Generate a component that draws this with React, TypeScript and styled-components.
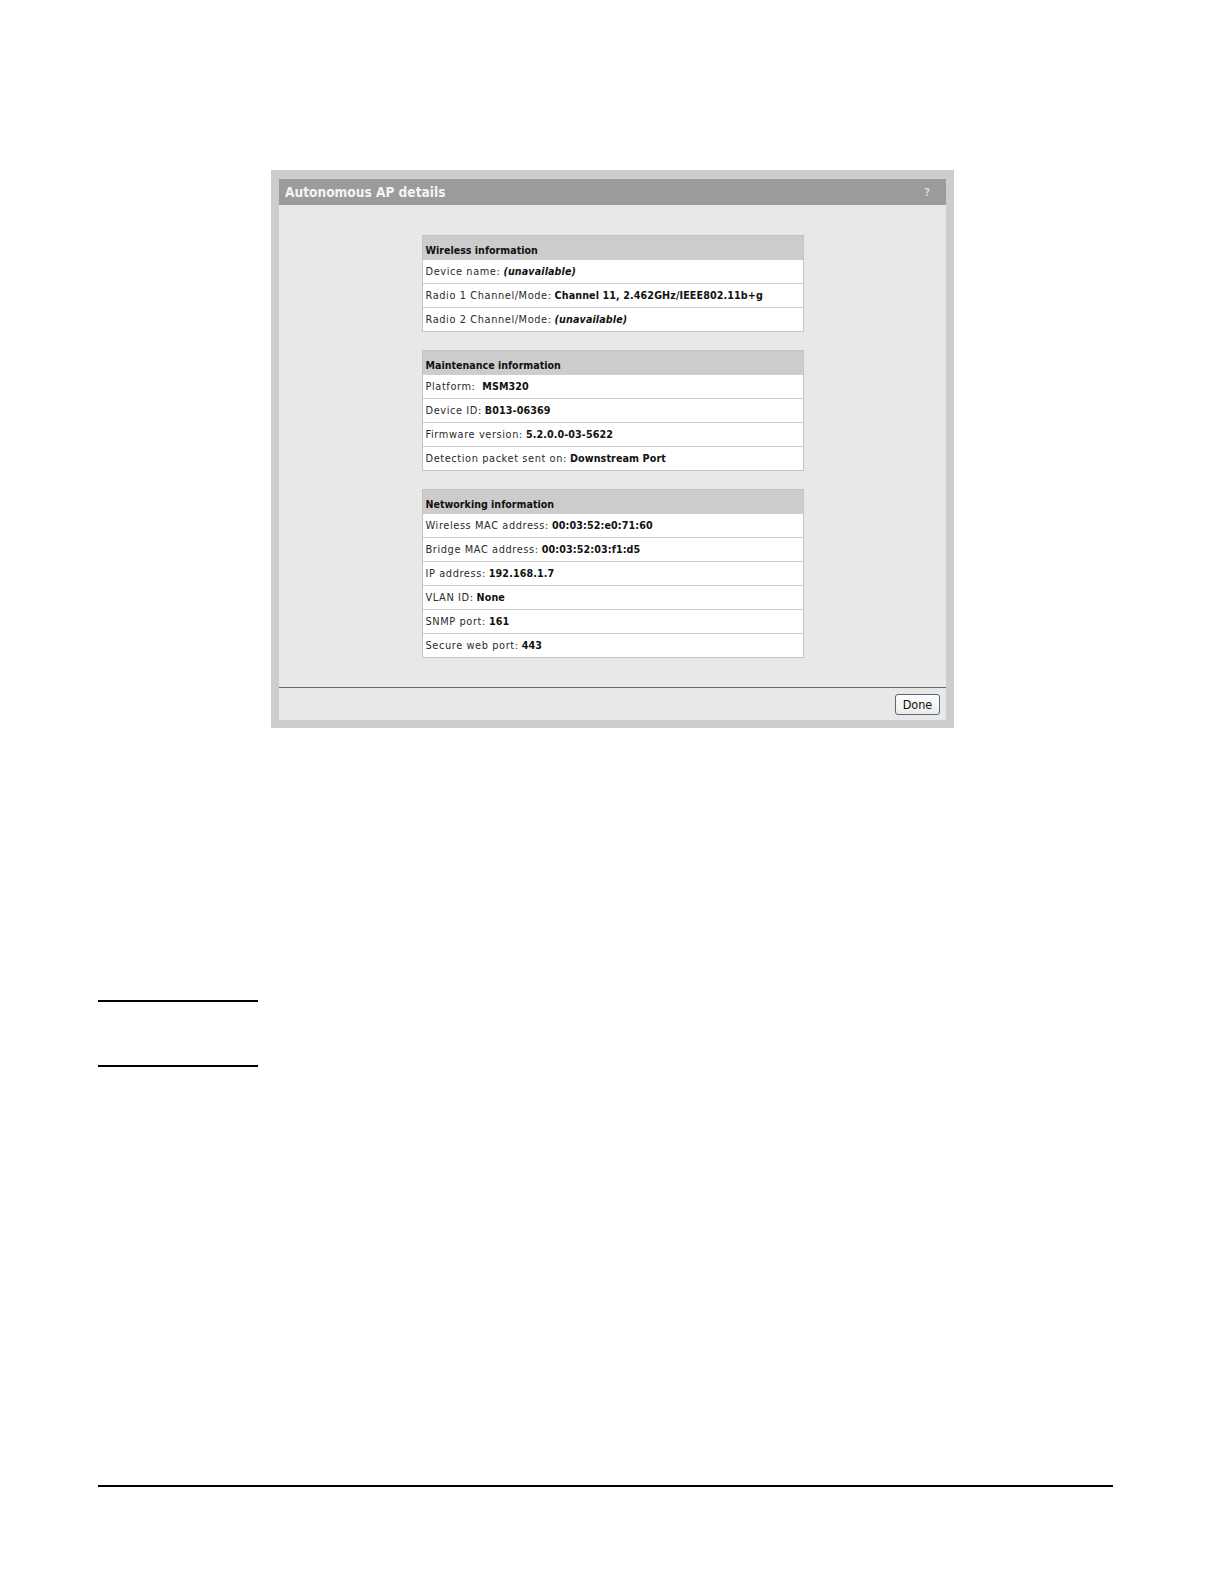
import React from "react";
import styled, { createGlobalStyle } from "styled-components";

const Global = createGlobalStyle`
  html, body { margin: 0; padding: 0; background: #ffffff; }
  body { font-family: "DejaVu Sans", Verdana, sans-serif; }
`;

const Page = styled.div`
  width: 1224px;
  height: 1584px;
  box-sizing: border-box;
  padding-top: 170px;
  display: flex;
  flex-direction: column;
`;

const Dialog = styled.div`
  width: 683px;
  box-sizing: border-box;
  margin-left: 271px;
  background: #cdcdcd;
  padding: 9px 8px 8px 8px;
`;

const TitleBar = styled.div`
  height: 26px;
  background: #9b9b9b;
  display: flex;
  align-items: center;
  justify-content: space-between;
  padding: 0 16px 0 6px;
  color: #f4f4f4;
  font-family: "DejaVu Sans Condensed", "DejaVu Sans", sans-serif;
  font-weight: bold;
  font-size: 13.6px;
`;

const Help = styled.span`
  color: #d8d8d8;
  font-size: 11px;
`;

const Body = styled.div`
  background: #e8e8e8;
  padding: 30px 0 29px;
  display: flex;
  flex-direction: column;
  align-items: center;
  gap: 18px;
`;

const Table = styled.div`
  width: 382px;
  box-sizing: border-box;
  border: 1px solid #c4c4c4;
  background: #ffffff;
`;

const TableHead = styled.div`
  height: 23px;
  background: #cccccc;
  display: flex;
  align-items: flex-end;
  padding: 0 0 3px 3px;
  box-sizing: border-box;
  font-family: "DejaVu Sans Condensed", "DejaVu Sans", sans-serif;
  font-weight: bold;
  font-size: 10.6px;
  color: #111;
`;

const Row = styled.div`
  height: 24px;
  box-sizing: border-box;
  border-top: 1px solid #cfcfcf;
  display: flex;
  align-items: center;
  padding-left: 3px;
  font-size: 9.8px;
  color: #2a2a2a;
  letter-spacing: 0.6px;
  white-space: pre;
  &:first-of-type { border-top: none; }
`;

const Value = styled.b<{ $italic?: boolean }>`
  font-weight: bold;
  font-style: ${(p) => (p.$italic ? "italic" : "normal")};
  color: #111;
  font-size: 9.6px;
  letter-spacing: 0.1px;
  margin-left: 3px;
`;

const Footer = styled.div`
  background: #e8e8e8;
  border-top: 1px solid #6a6a6a;
  height: 33px;
  box-sizing: border-box;
  display: flex;
  justify-content: flex-end;
  align-items: flex-start;
  padding: 6px 6px 0 0;
`;

const Button = styled.button`
  height: 21px;
  width: 45px;
  padding: 0;
  background: linear-gradient(#fdfdfd, #ececec);
  border: 1px solid #4f6a82;
  border-radius: 3px;
  font-family: "DejaVu Sans Condensed", "Liberation Sans", sans-serif;
  font-size: 12.5px;
  color: #111;
`;

const Rule = styled.div<{ $mt: number; $w: number; $t: number }>`
  margin-top: ${(p) => p.$mt}px;
  margin-left: 98px;
  width: ${(p) => p.$w}px;
  border-top: ${(p) => p.$t}px solid #000;
`;

type Item = { label: string; value: string; italic?: boolean };

const sections: { title: string; items: Item[] }[] = [
  {
    title: "Wireless information",
    items: [
      { label: "Device name:", value: "(unavailable)", italic: true },
      { label: "Radio 1 Channel/Mode:", value: "Channel 11, 2.462GHz/IEEE802.11b+g" },
      { label: "Radio 2 Channel/Mode:", value: "(unavailable)", italic: true },
    ],
  },
  {
    title: "Maintenance information",
    items: [
      { label: "Platform: ", value: "MSM320" },
      { label: "Device ID:", value: "B013-06369" },
      { label: "Firmware version:", value: "5.2.0.0-03-5622" },
      { label: "Detection packet sent on:", value: "Downstream Port" },
    ],
  },
  {
    title: "Networking information",
    items: [
      { label: "Wireless MAC address:", value: "00:03:52:e0:71:60" },
      { label: "Bridge MAC address:", value: "00:03:52:03:f1:d5" },
      { label: "IP address:", value: "192.168.1.7" },
      { label: "VLAN ID:", value: "None" },
      { label: "SNMP port:", value: "161" },
      { label: "Secure web port:", value: "443" },
    ],
  },
];

export default function App() {
  return (
    <Page>
      <Global />
      <Dialog>
        <TitleBar>
          <span>Autonomous AP details</span>
          <Help>?</Help>
        </TitleBar>
        <Body>
          {sections.map((s) => (
            <Table key={s.title}>
              <TableHead>{s.title}</TableHead>
              {s.items.map((it) => (
                <Row key={it.label}>
                  {it.label}
                  <Value $italic={it.italic}>{it.value}</Value>
                </Row>
              ))}
            </Table>
          ))}
        </Body>
        <Footer>
          <Button>Done</Button>
        </Footer>
      </Dialog>
      <Rule $mt={272} $w={160} $t={2} />
      <Rule $mt={63} $w={160} $t={2} />
      <Rule $mt={418} $w={1015} $t={2} />
    </Page>
  );
}
